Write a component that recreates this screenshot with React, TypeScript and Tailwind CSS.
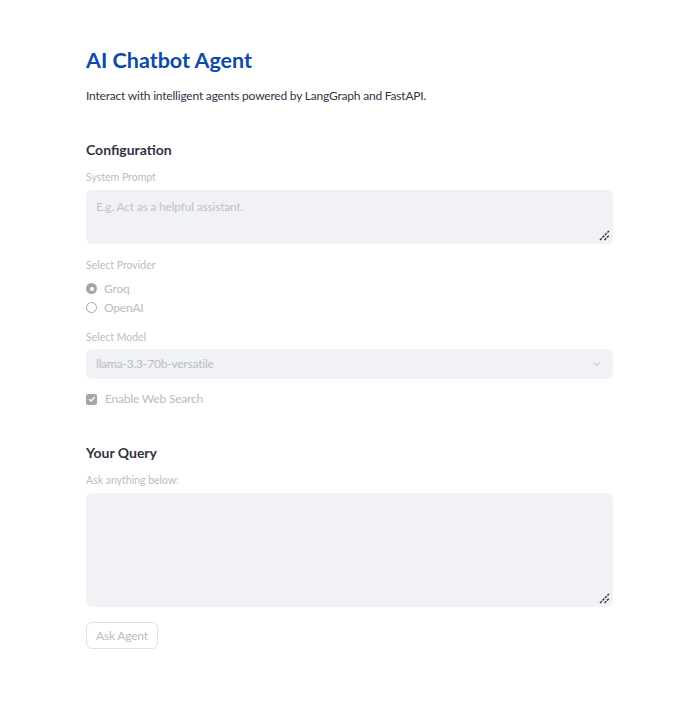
import { ChevronDown } from 'lucide-react'

function ResizeHandle() {
  return (
    <svg className="absolute right-[3px] bottom-[3px]" width="11" height="11" viewBox="0 0 11 11">
      <path d="M1 10 L10 1 M5.5 10 L10 5.5" stroke="#31333f" strokeWidth="1.5" strokeDasharray="2.5 1" />
    </svg>
  )
}

function Label({ children }: { children: React.ReactNode }) {
  return <p className="text-[10.5px] leading-[14px] text-[#b9bcc2]">{children}</p>
}

export default function App() {
  return (
    <div
      className="min-h-[715px] w-full bg-white text-[#31333f]"
      style={{ fontFamily: 'Lato, "Noto Sans", sans-serif' }}
    >
      <div className="mx-[86px] w-[527px] pt-[46px]">
        <h1 className="text-[21.5px] font-bold leading-[28px] text-[#0b4aa8]">AI Chatbot Agent</h1>
        <p className="mt-[14px] text-[12px] leading-[16px] tracking-[-0.2px] text-[#31333f]">
          Interact with intelligent agents powered by LangGraph and FastAPI.
        </p>

        <h2 className="mt-[37px] text-[14px] font-bold leading-[18px]">Configuration</h2>

        <div className="mt-[11px]">
          <Label>System Prompt</Label>
          <div className="relative mt-[6px] h-[54px] rounded-[6px] bg-[#f0f2f6] px-[10px] pt-[9px] text-[12px] leading-[16px] tracking-[-0.2px] text-[#bfc2c8]">
            E.g. Act as a helpful assistant.
            <ResizeHandle />
          </div>
        </div>

        <div className="mt-[14px]">
          <Label>Select Provider</Label>
          <div className="mt-[9px] flex flex-col gap-[4px] text-[12px] leading-[15px] tracking-[-0.2px] text-[#b9bcc2]">
            <div className="flex items-center gap-[7px]">
              <span className="flex h-[11px] w-[11px] items-center justify-center rounded-full bg-[#a3a6ad]">
                <span className="h-[4px] w-[4px] rounded-full bg-white" />
              </span>
              Groq
            </div>
            <div className="flex items-center gap-[7px]">
              <span className="h-[11px] w-[11px] rounded-full border border-[#a3a6ad]" />
              OpenAI
            </div>
          </div>
        </div>

        <div className="mt-[15px]">
          <Label>Select Model</Label>
          <div className="mt-[5px] flex h-[30px] items-center justify-between rounded-[6px] bg-[#f0f2f6] px-[10px] text-[12px] tracking-[-0.2px] text-[#b9bcc2]">
            llama-3.3-70b-versatile
            <ChevronDown size={12} strokeWidth={1.5} className="text-[#a3a6ad]" />
          </div>
        </div>

        <div className="mt-[11px] flex items-center gap-[8px] text-[12px] tracking-[-0.2px] text-[#b9bcc2]">
          <span className="flex h-[11px] w-[11px] items-center justify-center rounded-[2px] bg-[#a3a6ad]">
            <svg width="8" height="8" viewBox="0 0 8 8">
              <path d="M1.3 4.2 L3.2 6 L6.8 2" stroke="white" strokeWidth="1.4" fill="none" />
            </svg>
          </span>
          Enable Web Search
        </div>

        <h2 className="mt-[36px] text-[14px] font-bold leading-[18px]">Your Query</h2>

        <div className="mt-[11px]">
          <Label>Ask anything below:</Label>
          <div className="relative mt-[6px] h-[114px] rounded-[6px] bg-[#f0f2f6]">
            <ResizeHandle />
          </div>
        </div>

        <button
          disabled
          className="mt-[15px] h-[27px] rounded-[6px] border border-[#dfe1e5] px-[9px] text-[12px] tracking-[-0.2px] text-[#b9bcc2]"
        >
          Ask Agent
        </button>
      </div>
    </div>
  )
}
